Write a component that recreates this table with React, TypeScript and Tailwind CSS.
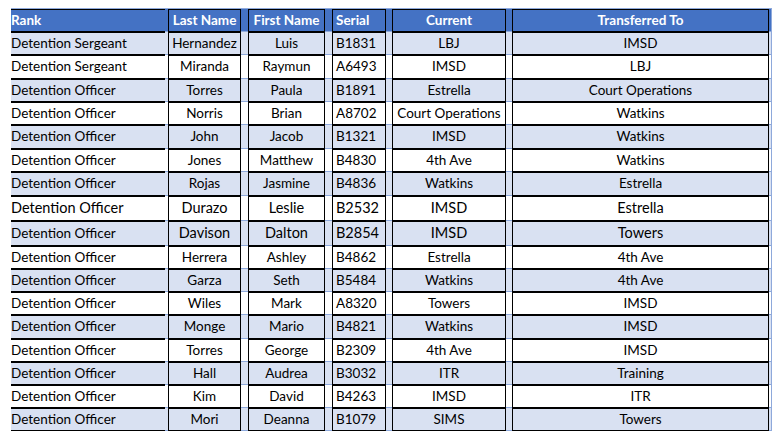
const cols = [
  { key: "rank", label: "Rank", cls: "w-[154px] border-y justify-start" },
  { key: "last", label: "Last Name", cls: "w-[73px] ml-[3px] border justify-center" },
  { key: "first", label: "First Name", cls: "w-[77px] ml-[7px] border justify-center" },
  { key: "serial", label: "Serial", cls: "w-[54px] ml-[7px] border justify-start pl-[3px]" },
  { key: "current", label: "Current", cls: "w-[114px] ml-[6px] border justify-center" },
  { key: "to", label: "Transferred To", cls: "w-[257px] ml-[6px] border justify-center" },
];

type Row = {
  rank: string;
  last: string;
  first: string;
  serial: string;
  current: string;
  to: string;
  h: string;
  big?: boolean;
  bigRank?: boolean;
};

const rows: Row[] = [
  { rank: "Detention Sergeant", last: "Hernandez", first: "Luis", serial: "B1831", current: "LBJ", to: "IMSD", h: "h-[23px]" },
  { rank: "Detention Sergeant", last: "Miranda", first: "Raymun", serial: "A6493", current: "IMSD", to: "LBJ", h: "h-[24px]" },
  { rank: "Detention Officer", last: "Torres", first: "Paula", serial: "B1891", current: "Estrella", to: "Court Operations", h: "h-[23px]" },
  { rank: "Detention Officer", last: "Norris", first: "Brian", serial: "A8702", current: "Court Operations", to: "Watkins", h: "h-[23px]" },
  { rank: "Detention Officer", last: "John", first: "Jacob", serial: "B1321", current: "IMSD", to: "Watkins", h: "h-[24px]" },
  { rank: "Detention Officer", last: "Jones", first: "Matthew", serial: "B4830", current: "4th Ave", to: "Watkins", h: "h-[23px]" },
  { rank: "Detention Officer", last: "Rojas", first: "Jasmine", serial: "B4836", current: "Watkins", to: "Estrella", h: "h-[24px]" },
  { rank: "Detention Officer", last: "Durazo", first: "Leslie", serial: "B2532", current: "IMSD", to: "Estrella", h: "h-[25px]", big: true, bigRank: true },
  { rank: "Detention Officer", last: "Davison", first: "Dalton", serial: "B2854", current: "IMSD", to: "Towers", h: "h-[25px]", big: true },
  { rank: "Detention Officer", last: "Herrera", first: "Ashley", serial: "B4862", current: "Estrella", to: "4th Ave", h: "h-[23px]" },
  { rank: "Detention Officer", last: "Garza", first: "Seth", serial: "B5484", current: "Watkins", to: "4th Ave", h: "h-[23px]" },
  { rank: "Detention Officer", last: "Wiles", first: "Mark", serial: "A8320", current: "Towers", to: "IMSD", h: "h-[23px]" },
  { rank: "Detention Officer", last: "Monge", first: "Mario", serial: "B4821", current: "Watkins", to: "IMSD", h: "h-[24px]" },
  { rank: "Detention Officer", last: "Torres", first: "George", serial: "B2309", current: "4th Ave", to: "IMSD", h: "h-[23px]" },
  { rank: "Detention Officer", last: "Hall", first: "Audrea", serial: "B3032", current: "ITR", to: "Training", h: "h-[23px]" },
  { rank: "Detention Officer", last: "Kim", first: "David", serial: "B4263", current: "IMSD", to: "ITR", h: "h-[23px]" },
  { rank: "Detention Officer", last: "Mori", first: "Deanna", serial: "B1079", current: "SIMS", to: "Towers", h: "h-[23px]" },
];

export default function App() {
  return (
    <div className="w-[781px] h-[436px] bg-white pt-[8px] pl-[11px] font-['Lato','Open_Sans',sans-serif] text-[13.5px] text-black overflow-hidden">
      <div className="w-[761px] border-t border-r border-[#8EA9DB]">
        {/* header */}
        <div className="flex h-[23px] bg-[#4472C4] border-b border-[#8EA9DB]">
          {cols.map((c) => (
            <div
              key={c.key}
              className={`${c.cls} h-[calc(100%+1px)] flex items-center border-black bg-[#4472C4] text-white font-bold leading-none`}
            >
              {c.label}
            </div>
          ))}
        </div>
        {rows.map((r, i) => (
          <div
            key={i}
            className={`flex ${r.h} border-b border-[#8EA9DB] ${i % 2 === 0 ? "bg-[#D9E1F2]" : "bg-white"}`}
          >
            {cols.map((c) => {
              const big = c.key === "rank" ? r.bigRank : r.big;
              return (
                <div
                  key={c.key}
                  className={`${c.cls} h-[calc(100%+1px)] flex items-center border-black leading-none ${
                    big ? "text-[14.5px]" : ""
                  }`}
                >
                  {r[c.key as keyof Row] as string}
                </div>
              );
            })}
          </div>
        ))}
      </div>
    </div>
  );
}
